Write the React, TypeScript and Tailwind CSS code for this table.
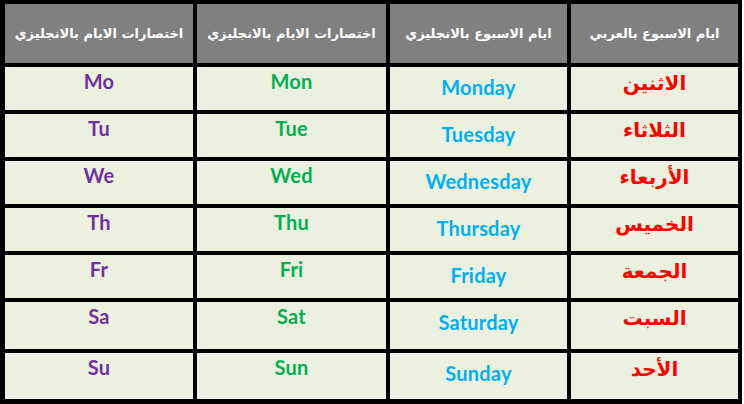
const days = [
  { short: "Mo", abbr: "Mon", en: "Monday", ar: "الاثنين" },
  { short: "Tu", abbr: "Tue", en: "Tuesday", ar: "الثلاثاء" },
  { short: "We", abbr: "Wed", en: "Wednesday", ar: "الأربعاء" },
  { short: "Th", abbr: "Thu", en: "Thursday", ar: "الخميس" },
  { short: "Fr", abbr: "Fri", en: "Friday", ar: "الجمعة" },
  { short: "Sa", abbr: "Sat", en: "Saturday", ar: "السبت" },
  { short: "Su", abbr: "Sun", en: "Sunday", ar: "الأحد" },
];

const headers = [
  "اختصارات الايام بالانجليزي",
  "اختصارات الايام بالانجليزي",
  "ايام الاسبوع بالانجليزي",
  "ايام الاسبوع بالعربي",
];

const latin = "font-['Lato','Open_Sans',sans-serif] font-bold text-[20px] leading-[28px] tracking-[0.2px]";

export default function App() {
  return (
    <div className="w-[744px] h-[404px] bg-white">
      <div className="grid w-[742px] grid-cols-[188px_189px_177px_167px] grid-rows-[59px_43px_43px_43px_43px_43px_47px_46px] gap-[4px] bg-black pt-[4px] pl-[5px] pr-[4px] pb-[5px]">
        {headers.map((h, i) => (
          <div
            key={i}
            dir="rtl"
            className="flex items-center justify-center bg-[#808080] text-white font-['DejaVu_Sans',sans-serif] font-bold text-[13px] tracking-[0.2px] whitespace-nowrap"
          >
            {h}
          </div>
        ))}
        {days.map((d) => (
          <div key={d.en} className="contents">
            <div className={`flex justify-center bg-[#ebf1de] text-[#7030a0] ${latin}`}>
              {d.short}
            </div>
            <div className={`flex justify-center bg-[#ebf1de] text-[#00b050] ${latin}`}>
              {d.abbr}
            </div>
            <div className={`flex justify-center bg-[#ebf1de] pt-[6px] text-[#00b0f0] ${latin}`}>
              {d.en}
            </div>
            <div
              dir="rtl"
              className="flex justify-center bg-[#ebf1de] pt-[2px] text-[#ff0000] font-['DejaVu_Sans',sans-serif] font-bold text-[20px] leading-[28px]"
            >
              {d.ar}
            </div>
          </div>
        ))}
      </div>
    </div>
  );
}
